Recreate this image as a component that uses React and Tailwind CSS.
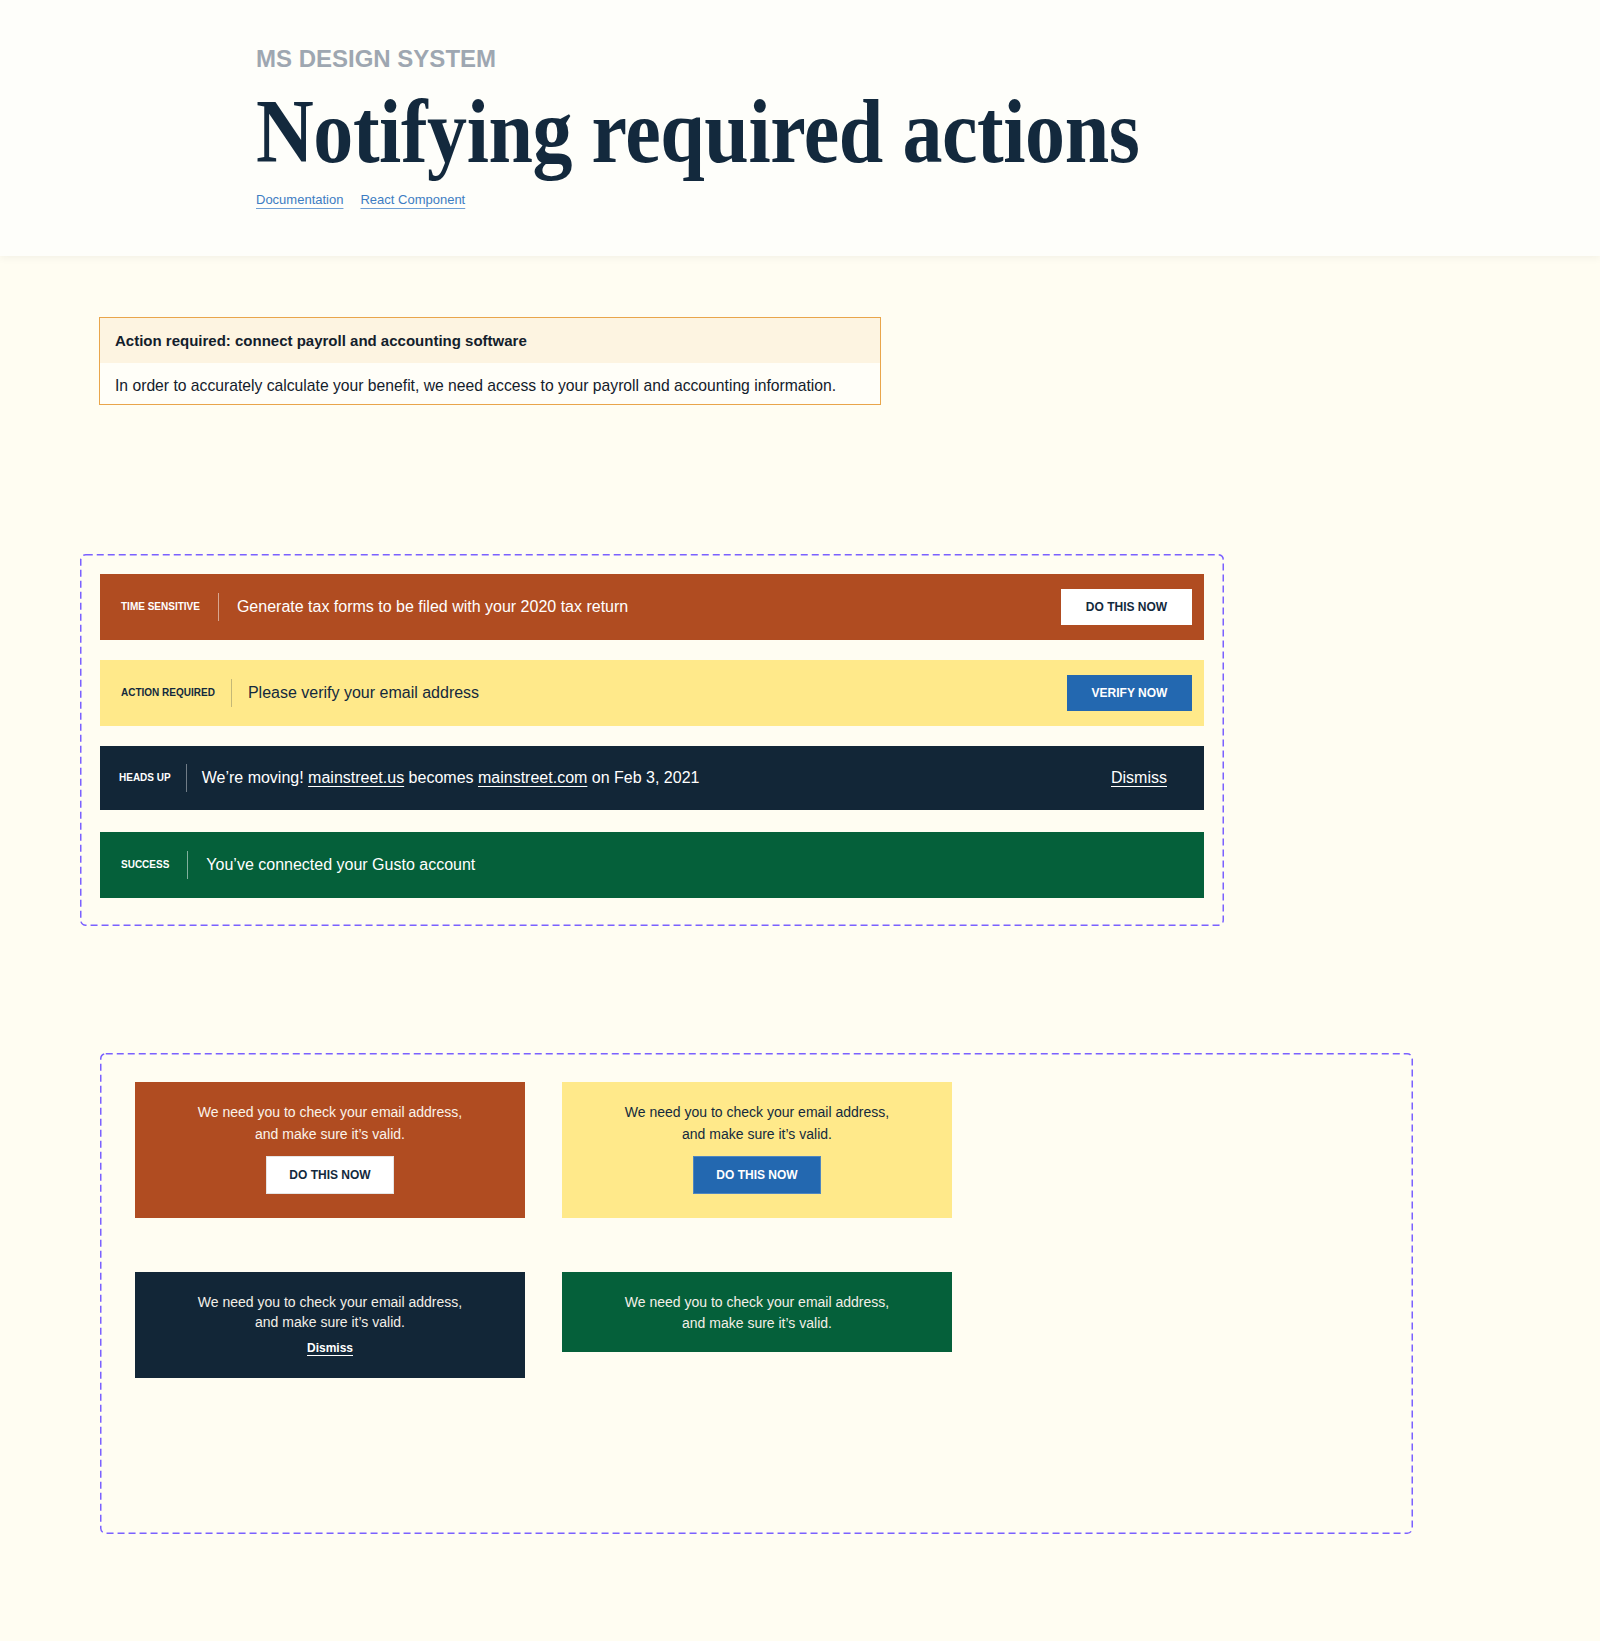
import React from "react";

function Dashed({ className, children }) {
  return (
    <div className={`relative rounded-[5px] ${className}`}>
      <svg className="absolute inset-0 w-full h-full pointer-events-none overflow-visible" aria-hidden="true">
        <rect
          x="0.75"
          y="0.75"
          width="calc(100% - 1.5px)"
          height="calc(100% - 1.5px)"
          rx="5"
          ry="5"
          fill="none"
          stroke="#7b61ff"
          strokeWidth="1.5"
          strokeDasharray="7 4"
        />
      </svg>
      {children}
    </div>
  );
}

function Banner({ bg, text, label, labelPad, gap, height, divider, message, right, rightPad, extra }) {
  return (
    <div className={`flex items-center ${bg} ${text} ${height} ${labelPad} ${rightPad} ${extra || ""}`}>
      <span className="text-[10px] font-bold leading-none whitespace-nowrap">{label}</span>
      <span className={`w-px h-[28px] ${divider} ${gap}`}></span>
      <span className="text-[16px] leading-[20px] flex-1 whitespace-nowrap">{message}</span>
      {right}
    </div>
  );
}

function Card({ bg, text, children, pad }) {
  return (
    <div className={`flex flex-col items-center text-center ${bg} ${text} ${pad}`}>
      {children}
    </div>
  );
}

export default function App() {
  return (
    <div className="min-h-[1641px] bg-[#fffdf2] font-['Liberation_Sans',Arial,sans-serif] pb-[107px]">
      <header className="h-[256px] bg-[#fefefa] shadow-[0_2px_8px_rgba(0,0,0,0.05)] pl-[256px] pt-[47px]">
        <div className="text-[24px] leading-none font-bold text-[#9ea7b1]">MS DESIGN SYSTEM</div>
        <h1 className="mt-[16px] font-['Liberation_Serif',Times,serif] font-bold text-[90px] leading-none text-[#13293d] whitespace-nowrap scale-x-[0.889] origin-left tracking-[-0.5px]">
          Notifying required actions
        </h1>
        <div className="mt-[15px] flex gap-[17px] text-[13px] leading-[16px] text-[#3d7cc2]">
          <a href="#" className="underline decoration-[#6f9fd4] underline-offset-[4px]">Documentation</a>
          <a href="#" className="underline decoration-[#6f9fd4] underline-offset-[4px]">React Component</a>
        </div>
      </header>

      <div className="ml-[99px] mt-[61px] w-[782px] border border-[#e9a54b] text-[#13202b]">
        <div className="h-[45px] bg-[#fdf4e1] px-[15px] pt-[2px] flex items-center text-[15px] font-bold">
          Action required: connect payroll and accounting software
        </div>
        <div className="bg-[#fffef8] px-[15px] pt-[13px] pb-[8px] text-[15.7px] leading-[20px] whitespace-nowrap">
          In order to accurately calculate your benefit, we need access to your payroll and accounting information.
        </div>
      </div>

      <Dashed className="ml-[80px] mt-[149px] w-[1144px] pt-[20px] px-[20px] pb-[28px]">
        <div className="flex flex-col gap-5">
          <Banner
            bg="bg-[#b04c21]"
            text="text-white"
            label="TIME SENSITIVE"
            labelPad="pl-[21px]"
            gap="mx-[18px]"
            height="h-[66px]"
            divider="bg-white/50"
            rightPad="pr-[12px]"
            message="Generate tax forms to be filed with your 2020 tax return"
            right={
              <button className="w-[131px] h-[36px] bg-white text-[#13293d] text-[12px] font-bold leading-none">
                DO THIS NOW
              </button>
            }
          />
          <Banner
            bg="bg-[#ffe98a]"
            text="text-[#13293d]"
            label="ACTION REQUIRED"
            labelPad="pl-[21px]"
            gap="mx-[16px]"
            height="h-[66px]"
            divider="bg-[#13293d]/25"
            rightPad="pr-[12px]"
            message="Please verify your email address"
            right={
              <button className="w-[125px] h-[36px] bg-[#2368b0] text-white text-[12px] font-bold leading-none">
                VERIFY NOW
              </button>
            }
          />
          <Banner
            bg="bg-[#122637]"
            text="text-white"
            label="HEADS UP"
            labelPad="pl-[19px]"
            gap="mx-[15px]"
            height="h-[64px]"
            divider="bg-white/40"
            rightPad="pr-[37px]"
            message={
              <>
                We’re moving!{" "}
                <a href="#" className="underline underline-offset-[3px]">mainstreet.us</a> becomes{" "}
                <a href="#" className="underline underline-offset-[3px]">mainstreet.com</a> on Feb 3, 2021
              </>
            }
            right={
              <a href="#" className="text-[16px] leading-[20px] underline underline-offset-[3px]">
                Dismiss
              </a>
            }
          />
          <Banner
            bg="bg-[#05603a]"
            text="text-white"
            label="SUCCESS"
            labelPad="pl-[21px]"
            gap="mx-[18px]"
            height="h-[66px]"
            divider="bg-white/50"
            rightPad="pr-[12px]"
            extra="mt-[2px]"
            message="You’ve connected your Gusto account"
          />
        </div>
      </Dashed>

      <Dashed className="ml-[100px] mt-[127px] w-[1313px] h-[481px] pt-[29px] pl-[35px]">
        <div className="grid grid-cols-[390px_390px] gap-x-[37px] gap-y-[54px] items-start">
          <Card bg="bg-[#b04c21]" text="text-[#fbf3ea]" pad="pt-[19px] pb-[24px]">
            <p className="text-[14px] leading-[22px]">
              We need you to check your email address,
              <br />
              and make sure it’s valid.
            </p>
            <button className="mt-[11px] w-[128px] h-[38px] bg-white border border-black/10 text-[#13293d] text-[12px] font-bold leading-none">
              DO THIS NOW
            </button>
          </Card>
          <Card bg="bg-[#ffe98a]" text="text-[#13293d]" pad="pt-[19px] pb-[24px]">
            <p className="text-[14px] leading-[22px]">
              We need you to check your email address,
              <br />
              and make sure it’s valid.
            </p>
            <button className="mt-[11px] w-[128px] h-[38px] bg-[#2368b0] border border-white/20 text-white text-[12px] font-bold leading-none">
              DO THIS NOW
            </button>
          </Card>
          <Card bg="bg-[#122637]" text="text-[#f3efe8]" pad="pt-[20px] pb-[22px]">
            <p className="text-[14px] leading-[20px]">
              We need you to check your email address,
              <br />
              and make sure it’s valid.
            </p>
            <a href="#" className="mt-[8px] text-[12px] leading-[16px] font-bold text-white underline underline-offset-[3px]">
              Dismiss
            </a>
          </Card>
          <Card bg="bg-[#05603a]" text="text-[#f3efe8]" pad="pt-[20px] pb-[18px]">
            <p className="text-[14px] leading-[21px]">
              We need you to check your email address,
              <br />
              and make sure it’s valid.
            </p>
          </Card>
        </div>
      </Dashed>
    </div>
  );
}
